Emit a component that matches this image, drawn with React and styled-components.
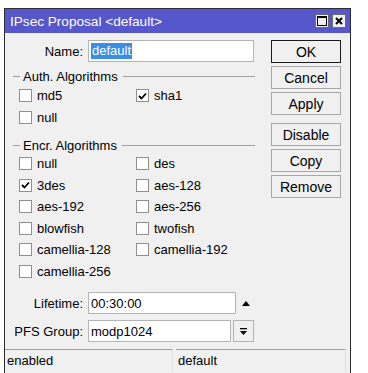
import React from 'react'
import styled, { createGlobalStyle } from 'styled-components'

const GlobalStyle = createGlobalStyle`
  body {
    margin: 0;
    background: #ffffff;
    font-family: 'Liberation Sans', Arial, sans-serif;
  }
`

const Window = styled.section`
  margin: 8px 0 0 4px;
  width: 345px;
  height: 380px;
  border: 1px solid #2e2e2e;
  border-bottom: none;
  background: #f0f0f0;
  display: flex;
  flex-direction: column;
  font-size: 13px;
  color: #000;
`

const TitleBar = styled.header`
  height: 24px;
  background: #5757cc;
  color: #fff;
  display: flex;
  align-items: center;
  padding: 0 4px 0 5px;
  font-size: 13.6px;
`

const Title = styled.span`
  flex: 1;
`

const TitleButtons = styled.div`
  display: flex;
  gap: 3px;
`

const TitleButton = styled.div`
  width: 12px;
  height: 12px;
  border: 1px solid #6b6b6b;
  background: #f0f0f0;
  display: flex;
  align-items: center;
  justify-content: center;
`

const Body = styled.div`
  display: flex;
  padding: 7px 9px 0 0;
  height: 308px;
`

const Form = styled.div`
  width: 250px;
  display: flex;
  flex-direction: column;
`

const FieldRow = styled.div`
  display: flex;
  align-items: center;
  height: 22px;
  margin-top: ${(p) => p.$top || 0}px;
`

const Label = styled.label`
  width: 78px;
  text-align: right;
  padding-right: 5px;
  white-space: nowrap;
`

const Input = styled.div`
  box-sizing: border-box;
  width: ${(p) => p.$w}px;
  height: 22px;
  background: #fff;
  border: 1px solid #b4b4b4;
  display: flex;
  align-items: center;
  padding-left: 2px;
`

const Selected = styled.span`
  background: #3a8ee6;
  color: #fff;
  padding: 0 1px;
  line-height: 16px;
`

const GroupHeader = styled.div`
  display: flex;
  align-items: center;
  height: 16px;
  margin-top: ${(p) => p.$top}px;
  padding-left: 8px;

  &::before {
    content: '';
    width: 7px;
    border-top: 1px solid #a0a0a0;
    margin-right: 3px;
  }

  &::after {
    content: '';
    flex: 1;
    border-top: 1px solid #a0a0a0;
    margin-left: 5px;
  }
`

const CheckGrid = styled.div`
  display: grid;
  grid-template-columns: 117px 1fr;
  grid-auto-rows: 21.5px;
  padding-left: 14px;
  margin-top: ${(p) => p.$top}px;
`

const CheckItem = styled.div`
  display: flex;
  align-items: center;
  gap: 5px;
`

const Box = styled.span`
  box-sizing: border-box;
  width: 13px;
  height: 13px;
  border: 1px solid #8f8f8f;
  background: #fff;
  display: flex;
  align-items: center;
  justify-content: center;
`

const Spinner = styled.span`
  margin-left: 6px;
  width: 0;
  height: 0;
  border-left: 4px solid transparent;
  border-right: 4px solid transparent;
  border-bottom: 5px solid #000;
`

const DropButton = styled.div`
  box-sizing: border-box;
  width: 21px;
  height: 22px;
  margin-left: 2px;
  border: 1px solid #b4b4b4;
  background: #f0f0f0;
  display: flex;
  align-items: center;
  justify-content: center;
`

const Buttons = styled.div`
  margin-left: auto;
  width: 70px;
  display: flex;
  flex-direction: column;
  gap: 3px;
`

const Button = styled.div`
  box-sizing: border-box;
  height: 23px;
  border: 1px solid ${(p) => (p.$focus ? '#1a1a1a' : '#a8a8a8')};
  background: #f0f0f0;
  display: flex;
  align-items: center;
  justify-content: center;
  font-size: 14px;
  margin-top: ${(p) => p.$gap || 0}px;
`

const StatusBar = styled.footer`
  display: flex;
  gap: 3px;
  padding-right: 4px;
  margin-top: 1px;
`

const StatusCell = styled.div`
  box-sizing: border-box;
  width: ${(p) => p.$w}px;
  height: 22px;
  border-top: 1px solid #a0a0a0;
  border-right: 1px solid #e2e2e2;
  padding-left: 2px;
  font-size: 13px;
  display: flex;
  align-items: center;
`

const Check = ({ label, checked }) => (
  <CheckItem>
    <Box>
      {checked && (
        <svg width='9' height='8' viewBox='0 0 9 8'>
          <path d='M1 4 L3.5 6.5 L8 1.5' stroke='#000' strokeWidth='1.8' fill='none' />
        </svg>
      )}
    </Box>
    <span>{label}</span>
  </CheckItem>
)

const encr = [
  ['null', false],
  ['des', false],
  ['3des', true],
  ['aes-128', false],
  ['aes-192', false],
  ['aes-256', false],
  ['blowfish', false],
  ['twofish', false],
  ['camellia-128', false],
  ['camellia-192', false],
  ['camellia-256', false],
]

const App = () => (
  <>
    <GlobalStyle />
    <Window>
      <TitleBar>
        <Title>IPsec Proposal &lt;default&gt;</Title>
        <TitleButtons>
          <TitleButton>
            <svg width='10' height='10' viewBox='0 0 10 10'>
              <rect x='0.5' y='0.5' width='9' height='9' stroke='#000' fill='none' />
              <line x1='0' y1='1.5' x2='10' y2='1.5' stroke='#000' />
            </svg>
          </TitleButton>
          <TitleButton>
            <svg width='8' height='8' viewBox='0 0 8 8'>
              <path d='M1 1 L7 7 M7 1 L1 7' stroke='#000' strokeWidth='2' />
            </svg>
          </TitleButton>
        </TitleButtons>
      </TitleBar>
      <Body>
        <Form>
          <FieldRow>
            <Label>Name:</Label>
            <Input $w={166}>
              <Selected>default</Selected>
            </Input>
          </FieldRow>
          <GroupHeader $top={6}>Auth. Algorithms</GroupHeader>
          <CheckGrid $top={1}>
            <Check label='md5' />
            <Check label='sha1' checked />
            <Check label='null' />
          </CheckGrid>
          <GroupHeader $top={9}>Encr. Algorithms</GroupHeader>
          <CheckGrid $top={0}>
            {encr.map(([l, c]) => (
              <Check key={l} label={l} checked={c} />
            ))}
          </CheckGrid>
          <FieldRow $top={10}>
            <Label>Lifetime:</Label>
            <Input $w={148}>00:30:00</Input>
            <Spinner />
          </FieldRow>
          <FieldRow $top={6}>
            <Label>PFS Group:</Label>
            <Input $w={143}>modp1024</Input>
            <DropButton>
              <svg width='9' height='9' viewBox='0 0 9 9'>
                <rect x='1' y='1' width='7' height='1.3' fill='#000' />
                <path d='M1 4 L8 4 L4.5 8 Z' fill='#000' />
              </svg>
            </DropButton>
          </FieldRow>
        </Form>
        <Buttons>
          <Button $focus>OK</Button>
          <Button>Cancel</Button>
          <Button>Apply</Button>
          <Button $gap={5}>Disable</Button>
          <Button>Copy</Button>
          <Button>Remove</Button>
        </Buttons>
      </Body>
      <StatusBar>
        <StatusCell $w={168}>enabled</StatusCell>
        <StatusCell $w={170}>default</StatusCell>
      </StatusBar>
    </Window>
  </>
)

export default App
